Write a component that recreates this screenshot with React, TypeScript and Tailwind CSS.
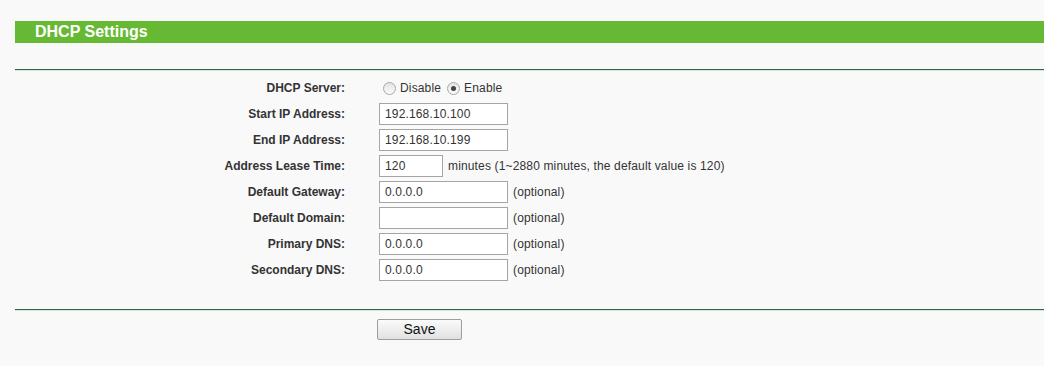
const rows: { label: string; value: string; short?: boolean; note: string }[] = [
  { label: 'Start IP Address:', value: '192.168.10.100', note: '' },
  { label: 'End IP Address:', value: '192.168.10.199', note: '' },
  {
    label: 'Address Lease Time:',
    value: '120',
    short: true,
    note: 'minutes (1~2880 minutes, the default value is 120)',
  },
  { label: 'Default Gateway:', value: '0.0.0.0', note: '(optional)' },
  { label: 'Default Domain:', value: '', note: '(optional)' },
  { label: 'Primary DNS:', value: '0.0.0.0', note: '(optional)' },
  { label: 'Secondary DNS:', value: '0.0.0.0', note: '(optional)' },
];

function Radio({ checked }: { checked?: boolean }) {
  return (
    <span className="ml-[4px] mr-[4px] w-[13px] h-[13px] rounded-full border border-[#a8a8a8] bg-gradient-to-b from-[#e4e4e4] to-[#fbfbfb] flex items-center justify-center">
      {checked && <span className="w-[5px] h-[5px] rounded-full bg-[#444]" />}
    </span>
  );
}

export default function App() {
  return (
    <div className="min-h-screen bg-[#f9f9f9] font-['Liberation_Sans',Arial,sans-serif] text-[12px] text-[#333]">
      <div className="pt-[21px] pl-[15px]">
        <div className="h-[22px] bg-[#66b933] text-white font-bold text-[16px] leading-[22px] pl-[20px]">
          DHCP Settings
        </div>
        <div className="mt-[26px] h-px bg-[#2d6a4c]" />
        <div className="h-px bg-[#cfe8d6]" />
      </div>

      <div className="pt-[4px] grid grid-cols-[345px_auto] gap-x-[34px] auto-rows-[26px] items-center">
        <div className="text-right font-bold">DHCP Server:</div>
        <div className="flex items-center tracking-[0.15px]">
          <Radio />
          <span className="mr-[2px]">Disable</span>
          <Radio checked />
          <span>Enable</span>
        </div>

        {rows.map((r) => (
          <div key={r.label} className="contents">
            <div className="text-right font-bold">{r.label}</div>
            <div className="flex items-center tracking-[0.15px]">
              <div
                className={`h-[22px] border border-[#a5a5a5] bg-white pl-[5px] leading-[20px] ${
                  r.short ? 'w-[64px]' : 'w-[129px]'
                }`}
              >
                {r.value}
              </div>
              {r.note && <span className="ml-[5px]">{r.note}</span>}
            </div>
          </div>
        ))}
      </div>

      <div className="pl-[15px] mt-[26px]">
        <div className="h-px bg-[#2d6a4c]" />
        <div className="h-px bg-[#cfe8d6]" />
      </div>

      <div className="pt-[8px] pl-[377px]">
        <button className="w-[85px] h-[21px] border border-[#9d9d9d] rounded-[2px] bg-gradient-to-b from-[#fbfbfb] to-[#e1e1e1] text-[14px] leading-[19px] text-[#111]">
          Save
        </button>
      </div>
    </div>
  );
}
